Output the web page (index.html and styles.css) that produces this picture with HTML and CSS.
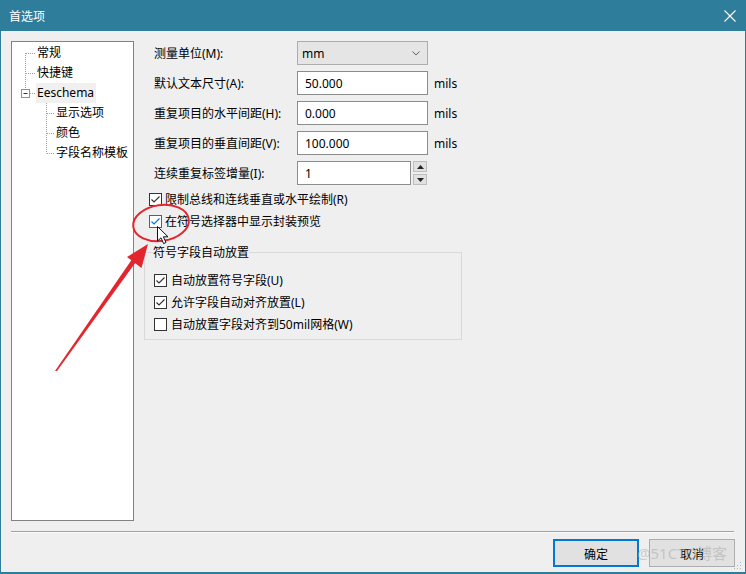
FILE: index.html
```html
<!DOCTYPE html>
<html lang="zh-CN">
<head>
<meta charset="utf-8">
<title>首选项</title>
<link rel="stylesheet" href="styles.css">
</head>
<body>
<div class="window">
  <div class="titlebar">
    <span class="title">首选项</span>
    <svg class="close" width="14" height="14" viewBox="0 0 14 14"><path d="M1.5 1.5 L12.5 12.5 M12.5 1.5 L1.5 12.5" stroke="#fff" stroke-width="1.1" fill="none"/></svg>
  </div>
  <div class="client">
    <div class="main">
      <div class="tree">
        <div class="node">
          <svg class="c1" width="24" height="20"><path d="M13.5 10 V20 M14 10.5 H23" stroke="#a0a0a0" stroke-dasharray="1 1" fill="none"/></svg>
          <span class="lbl">常规</span>
        </div>
        <div class="node">
          <svg class="c1" width="24" height="20"><path d="M13.5 0 V20 M14 10.5 H23" stroke="#a0a0a0" stroke-dasharray="1 1" fill="none"/></svg>
          <span class="lbl">快捷键</span>
        </div>
        <div class="node">
          <svg class="c1" width="24" height="20"><path d="M13.5 0 V6 M18 10.5 H23" stroke="#a0a0a0" stroke-dasharray="1 1" fill="none"/><rect x="9.5" y="6.5" width="8" height="8" fill="#fff" stroke="#919191"/><path d="M11.5 10.5 H15.5" stroke="#333" fill="none"/></svg>
          <span class="lbl sel">Eeschema</span>
        </div>
        <div class="node">
          <svg class="c2" width="43" height="20"><path d="M34.5 0 V20 M35 10.5 H43" stroke="#a0a0a0" stroke-dasharray="1 1" fill="none"/></svg>
          <span class="lbl">显示选项</span>
        </div>
        <div class="node">
          <svg class="c2" width="43" height="20"><path d="M34.5 0 V20 M35 10.5 H43" stroke="#a0a0a0" stroke-dasharray="1 1" fill="none"/></svg>
          <span class="lbl">颜色</span>
        </div>
        <div class="node">
          <svg class="c2" width="43" height="20"><path d="M34.5 0 V10.5 M35 10.5 H43" stroke="#a0a0a0" stroke-dasharray="1 1" fill="none"/></svg>
          <span class="lbl">字段名称模板</span>
        </div>
      </div>
      <div class="panel">
        <div class="form">
          <span class="flabel">测量单位(M):</span>
          <div class="combo"><span>mm</span><svg width="8" height="5" viewBox="0 0 8 5"><path d="M0.5 0.5 L4 4 L7.5 0.5" stroke="#606060" fill="none"/></svg></div>
          <span></span>

          <span class="flabel">默认文本尺寸(A):</span>
          <div class="tbox">50.000</div>
          <span class="unit">mils</span>

          <span class="flabel">重复项目的水平间距(H):</span>
          <div class="tbox">0.000</div>
          <span class="unit">mils</span>

          <span class="flabel">重复项目的垂直间距(V):</span>
          <div class="tbox">100.000</div>
          <span class="unit">mils</span>

          <span class="flabel">连续重复标签增量(I):</span>
          <div class="spin">
            <div class="tbox">1</div>
            <div class="spinbtns">
              <div class="sbtn"><svg width="7" height="4" viewBox="0 0 7 4"><path d="M0 4 L3.5 0 L7 4 Z" fill="#222"/></svg></div>
              <div class="sbtn"><svg width="7" height="4" viewBox="0 0 7 4"><path d="M0 0 L3.5 4 L7 0 Z" fill="#222"/></svg></div>
            </div>
          </div>
          <span></span>
        </div>

        <div class="checks">
          <div class="chk"><span class="box on"><svg width="11" height="11" viewBox="0 0 11 11"><path d="M1.5 5.5 L4 8 L9.5 2.5" stroke="#333" stroke-width="1.2" fill="none"/></svg></span><span>限制总线和连线垂直或水平绘制(R)</span></div>
          <div class="chk"><span class="box on hover"><svg width="11" height="11" viewBox="0 0 11 11"><path d="M1.5 5.5 L4 8 L9.5 2.5" stroke="#0078d7" stroke-width="1.2" fill="none"/></svg></span><span>在符号选择器中显示封装预览</span></div>
        </div>

        <fieldset class="group">
          <legend>符号字段自动放置</legend>
          <div class="chk"><span class="box on"><svg width="11" height="11" viewBox="0 0 11 11"><path d="M1.5 5.5 L4 8 L9.5 2.5" stroke="#333" stroke-width="1.2" fill="none"/></svg></span><span>自动放置符号字段(U)</span></div>
          <div class="chk"><span class="box on"><svg width="11" height="11" viewBox="0 0 11 11"><path d="M1.5 5.5 L4 8 L9.5 2.5" stroke="#333" stroke-width="1.2" fill="none"/></svg></span><span>允许字段自动对齐放置(L)</span></div>
          <div class="chk"><span class="box"></span><span>自动放置字段对齐到50mil网格(W)</span></div>
        </fieldset>
      </div>
    </div>
    <div class="sep"></div>
    <div class="buttons">
      <button class="btn default">确定</button>
      <button class="btn">取消</button>
    </div>
  </div>

  <svg class="annot" width="746" height="574" viewBox="0 0 746 574">
    <ellipse cx="161" cy="223" rx="28" ry="18" transform="rotate(-8 161 223)" stroke="#e3262d" stroke-width="2" fill="none"/>
    <polygon points="55,371 57,371 141,255 137,252" fill="#e3262d"/>
    <polygon points="148,244 141.5,268 127,257" fill="#e3262d"/>
    <path d="M157.5 226.5 V241 L161 237.8 L163.6 243.6 L166 242.5 L163.4 236.8 L168 236.8 Z" fill="#fff" stroke="#111" stroke-width="1" stroke-linejoin="miter"/>
    <g fill="#b5b5b5">
      <rect x="740" y="562" width="1" height="1"/>
      <rect x="737" y="565" width="1" height="1"/><rect x="740" y="565" width="1" height="1"/>
      <rect x="734" y="568" width="1" height="1"/><rect x="737" y="568" width="1" height="1"/><rect x="740" y="568" width="1" height="1"/>
    </g>
  </svg>
  <div class="watermark">@51CTO博客</div>
</div>
</body>
</html>
```

FILE: styles.css
```css
* { box-sizing: border-box; }
html, body { margin: 0; padding: 0; }
body {
  width: 746px;
  height: 574px;
  overflow: hidden;
  font-family: "Noto Sans", "Noto Sans CJK SC", sans-serif;
  font-size: 12px;
  color: #000;
  background: #fff;
}
.window {
  position: relative;
  width: 746px;
  height: 574px;
  display: flex;
  flex-direction: column;
}
.titlebar {
  height: 31px;
  flex: none;
  background: #2e7d9a;
  color: #fff;
  display: flex;
  align-items: center;
  justify-content: space-between;
  padding: 0 9px 0 9px;
}
.title { font-size: 12px; line-height: 16px; font-family: "Noto Sans CJK SC", sans-serif; }
.close { display: block; }
.client {
  flex: 1;
  background: #efefef;
  border: 1px solid #2e7d9a;
  border-top: 0;
  border-bottom-width: 2px;
  padding: 10px 10px 0 10px;
  display: flex;
  flex-direction: column;
}
.main { display: flex; gap: 10px; height: 480px; flex: none; }
.tree {
  width: 123px;
  height: 480px;
  background: #fff;
  border: 1px solid #828282;
  padding-top: 1px;
  display: flex;
  flex-direction: column;
}
.node { display: flex; align-items: center; height: 20px; }
.node svg { display: block; flex: none; }
.lbl { padding: 0 1px; line-height: 20px; white-space: nowrap; font-family: "Noto Sans", "Noto Sans CJK SC", sans-serif; }
.lbl.sel { background: #f0f0f0; padding-right: 2px; }

.panel { display: flex; flex-direction: column; }
.form {
  display: grid;
  grid-template-columns: 137px 131px auto;
  column-gap: 6px;
  row-gap: 6px;
  padding-left: 10px;
  align-items: center;
}
.flabel { white-space: nowrap; }
.combo {
  height: 24px;
  background: #e5e5e5;
  border: 1px solid #adadad;
  display: flex;
  align-items: center;
  justify-content: space-between;
  padding: 0 7px 0 4px;
}
.tbox {
  height: 24px;
  background: #fff;
  border: 1px solid #8c8c8c;
  display: flex;
  align-items: center;
  padding: 0 7px;
}
.unit { white-space: nowrap; }
.spin { display: flex; gap: 2px; }
.spin .tbox { width: 114px; }
.spinbtns { width: 14px; display: flex; flex-direction: column; gap: 2px; }
.sbtn {
  height: 11px;
  background: #e1e1e1;
  border: 1px solid #bdbdbd;
  display: flex;
  align-items: center;
  justify-content: center;
}
.sbtn svg { display: block; }

.checks { padding-left: 5px; margin-top: 3px; }
.chk { display: flex; align-items: center; height: 22px; gap: 3px; white-space: nowrap; }
.box {
  width: 13px;
  height: 13px;
  flex: none;
  background: #fff;
  border: 1px solid #333;
  display: flex;
  align-items: center;
  justify-content: center;
}
.box svg { display: block; }
.box.hover { border-color: #0078d7; }

.group {
  width: 318px;
  margin: 12px 0 0 0;
  border: 1px solid #d9d9d9;
  padding: 8px 0 4px 9px;
}
.group legend { padding: 0; margin-left: -1px; line-height: 17px; }
.group .chk { gap: 4px; }

.sep {
  height: 2px;
  margin-top: 10px;
  margin-right: 1px;
  border-top: 1px solid #a0a0a0;
  border-bottom: 1px solid #fbfbfb;
  flex: none;
}
.buttons {
  margin-top: 6px;
  display: flex;
  justify-content: flex-end;
  gap: 10px;
}
.btn {
  width: 86px;
  height: 28px;
  background: #e1e1e1;
  border: 1px solid #adadad;
  font-family: "Noto Sans CJK SC", sans-serif;
  font-size: 12px;
  color: #000;
  padding: 0;
  margin: 0;
}
.btn.default { border: 2px solid #0078d7; }

.annot { position: absolute; left: 0; top: 0; pointer-events: none; }
.watermark {
  position: absolute;
  left: 637px;
  top: 543px;
  font-family: "Noto Sans", "Noto Sans CJK SC", sans-serif;
  font-size: 15px;
  line-height: 20px;
  color: rgba(170, 170, 170, 0.55);
  pointer-events: none;
}
```
